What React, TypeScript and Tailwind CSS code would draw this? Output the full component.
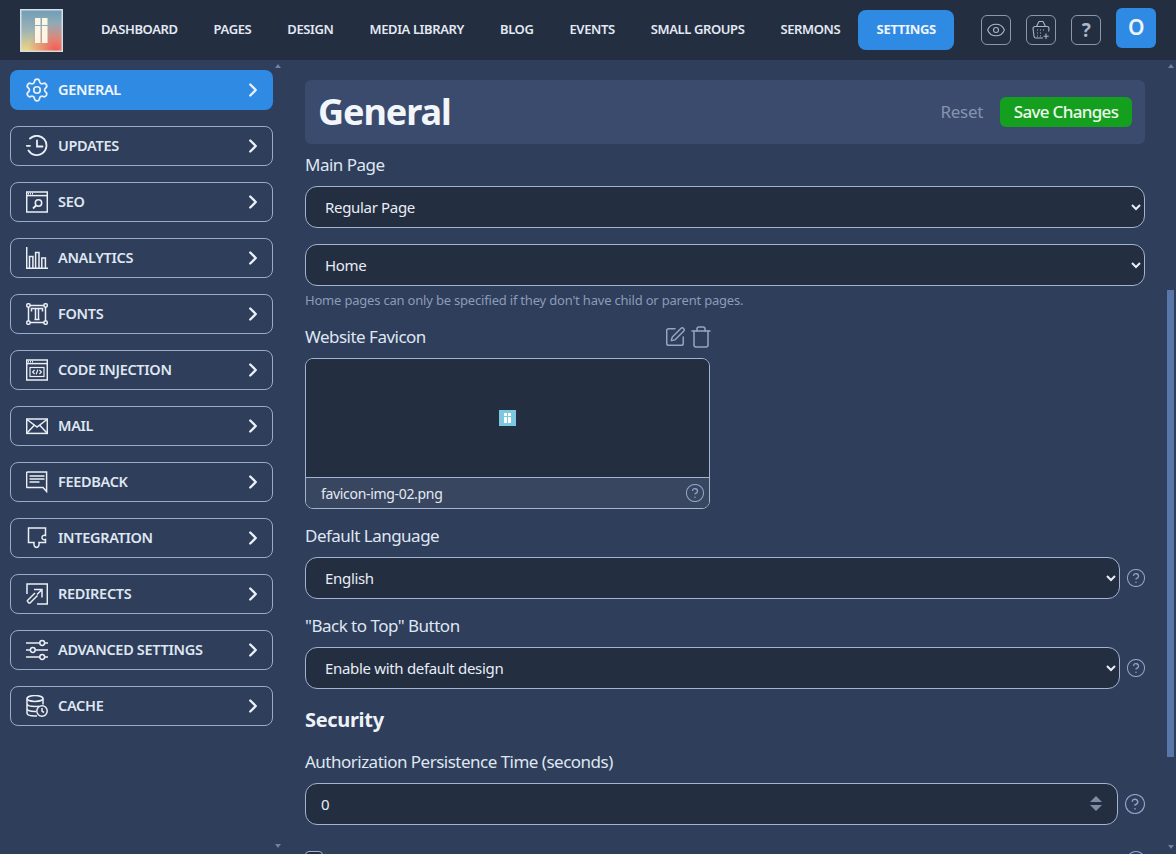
import React from "react";
import { ChevronRight, Eye, Settings, SquarePen, Trash } from "lucide-react";

const navItems = ["DASHBOARD", "PAGES", "DESIGN", "MEDIA LIBRARY", "BLOG", "EVENTS", "SMALL GROUPS", "SERMONS"];

const iconProps = {
  width: 22,
  height: 22,
  viewBox: "0 0 22 22",
  fill: "none",
  stroke: "currentColor",
  strokeWidth: 1.5,
};

function SeoIcon() {
  return (
    <svg {...iconProps}>
      <rect x="0.7" y="1" width="20.6" height="20" />
      <path d="M1 4.6h20" />
      <path d="M2 2.8h5" strokeDasharray="1 1" />
      <circle cx="12.5" cy="12" r="3.2" />
      <path d="M10 14.5l-3 3" strokeWidth="1.8" />
    </svg>
  );
}

function AnalyticsIcon() {
  return (
    <svg {...iconProps}>
      <path d="M0.7 0v21.3H22" />
      <path d="M3.5 21V9.5h3.4V21M9.6 21V5.5h3.4V21M15.8 21V11h3.6v10" />
    </svg>
  );
}

function FontsIcon() {
  return (
    <svg {...iconProps}>
      <rect x="2.5" y="2.5" width="17" height="17" />
      <rect x="0.8" y="0.8" width="3.2" height="3.2" rx="1" fill="#2f3e5a" />
      <rect x="18" y="0.8" width="3.2" height="3.2" rx="1" fill="#2f3e5a" />
      <rect x="0.8" y="18" width="3.2" height="3.2" rx="1" fill="#2f3e5a" />
      <rect x="18" y="18" width="3.2" height="3.2" rx="1" fill="#2f3e5a" />
      <path d="M5.5 8.5V5.500h11v3M9.500 6v10.500M12.500 6v10.500M8.400 16.600h5.200" />
    </svg>
  );
}

function CodeIcon() {
  return (
    <svg {...iconProps}>
      <rect x="0.7" y="1" width="20.6" height="20" />
      <path d="M1 4.6h20" />
      <path d="M2 2.8h5" strokeDasharray="1 1" />
      <rect x="4" y="8.5" width="14" height="9" strokeWidth="1.2" />
      <path d="M8.6 11l-2 2 2 2M13.4 11l2 2-2 2M11.8 10.8l-1.6 4.4" strokeWidth="1.2" />
    </svg>
  );
}

function MailIcon() {
  return (
    <svg {...iconProps}>
      <rect x="0.7" y="4" width="20.6" height="14.4" />
      <path d="M1 4.5l10 7.500 10-7.500M1 18l7-7.500M21 18l-7-7.500" />
    </svg>
  );
}

function FeedbackIcon() {
  return (
    <svg {...iconProps}>
      <path d="M1.6 1h19v19.500l-3.600-3.900H1.600a1 1 0 0 1-1-1V2a1 1 0 0 1 1-1z" />
      <path d="M3.5 5h15M3.500 8h15M3.500 11h10" strokeWidth="1.6" />
    </svg>
  );
}

function IntegrationIcon() {
  return (
    <svg {...iconProps}>
      <path d="M2.5 1H19.500V8.500c-2-.8-3.500.3-3.500 2s1.500 2.800 3.500 2V15.500H13c.6 2.500-.5 5-2.500 5s-3-2.500-2.500-5H2.500Z" />
    </svg>
  );
}

function RedirectsIcon() {
  return (
    <svg {...iconProps}>
      <path d="M1 11V1h20.300v20H11" />
      <path d="M1 18l8-8M3.500 20.500l8-8M1 18l2.500 2.500" />
      <path d="M8 6.500h8v8M15.500 7L11 11.500" />
    </svg>
  );
}

function SlidersIcon() {
  return (
    <svg {...iconProps}>
      <path d="M0 4h13.800M18.600 4h3.400M0 11h4.400M9.200 11h12.800M0 18h13.800M18.600 18h3.400" />
      <circle cx="16.200" cy="4" r="2.400" />
      <circle cx="6.800" cy="11" r="2.400" />
      <circle cx="16.200" cy="18" r="2.400" />
    </svg>
  );
}

function CacheIcon() {
  return (
    <svg {...iconProps}>
      <ellipse cx="9" cy="3.500" rx="8" ry="2.900" />
      <path d="M1 3.500v14.500c0 1.800 3 3 8 3h2M17 3.500v6M1 8.500c0 1.800 3.500 3 8 3 1.500 0 3-.1 4-.4M1 13.500c0 1.800 3.500 2.900 8 2.900h1" />
      <circle cx="16" cy="16" r="5.200" fill="#2f3e5a" />
      <path d="M16 13v3.200l2 1.300" />
    </svg>
  );
}

function GearIcon() {
  return <Settings size={26} strokeWidth={1.6} className="shrink-0" />;
}

function UpdatesIcon() {
  return (
    <svg {...iconProps} strokeWidth="1.8" strokeLinecap="round">
      <path d="M4 3.500A9.700 9.700 0 1 1 2.500 15.500" />
      <path d="M0.800 10.800H4" />
      <path d="M11 5.500V11.500H16.500" />
    </svg>
  );
}

const sideItems = [
  { label: "GENERAL", Icon: GearIcon, active: true },
  { label: "UPDATES", Icon: UpdatesIcon },
  { label: "SEO", Icon: SeoIcon },
  { label: "ANALYTICS", Icon: AnalyticsIcon },
  { label: "FONTS", Icon: FontsIcon },
  { label: "CODE INJECTION", Icon: CodeIcon },
  { label: "MAIL", Icon: MailIcon },
  { label: "FEEDBACK", Icon: FeedbackIcon },
  { label: "INTEGRATION", Icon: IntegrationIcon },
  { label: "REDIRECTS", Icon: RedirectsIcon },
  { label: "ADVANCED SETTINGS", Icon: SlidersIcon },
  { label: "CACHE", Icon: CacheIcon },
];

function Logo() {
  return (
    <svg width="43" height="43" viewBox="0 0 43 43" className="shrink-0 mt-px">
      <defs>
        <linearGradient id="logoBase" x1="0" y1="0" x2="0" y2="1">
          <stop offset="0" stopColor="#6f9db8" />
          <stop offset="0.5" stopColor="#9fb3b4" />
          <stop offset="1" stopColor="#f2d77e" />
        </linearGradient>
        <radialGradient id="logoRed" cx="0.85" cy="1" r="0.7">
          <stop offset="0" stopColor="#f2575a" />
          <stop offset="1" stopColor="#f2575a" stopOpacity="0" />
        </radialGradient>
      </defs>
      <rect x="0.75" y="0.75" width="41.5" height="41.5" fill="url(#logoBase)" stroke="#d5dde6" strokeWidth="1.5" />
      <rect x="1.5" y="1.5" width="40" height="40" fill="url(#logoRed)" />
      <rect x="15" y="9" width="5.5" height="7" fill="#fdf6e6" />
      <rect x="22" y="9" width="5.5" height="7" fill="#fdf6e6" />
      <rect x="15" y="17" width="5.5" height="17" fill="#fdf6e6" />
      <rect x="22" y="17" width="5.5" height="17" fill="#fdf6e6" />
    </svg>
  );
}

function BasketIcon() {
  return (
    <svg width="20" height="20" viewBox="0 0 20 20" fill="none" stroke="currentColor" strokeWidth="1.1">
      <path d="M5.5 6.500L8 1.500h4l2.500 5" />
      <path d="M12 18H5a2 2 0 0 1-2-1.800L2 8.500a2 2 0 0 1 2-2h12a2 2 0 0 1 2 2l-.3 3" />
      <path d="M6 10h1M9 10h1M12 10h1M6 13h1M9 13h1M6 16h1M9 16h1" />
      <path d="M15 13.500v5.500M12.500 16.200h5.200" />
    </svg>
  );
}

function Help({ size = 18 }: { size?: number }) {
  return (
    <svg width={size} height={size} viewBox="1.5 1.5 21 21" fill="none" stroke="currentColor" strokeWidth="1.2" strokeLinecap="round" className="text-[#8ea3c8] shrink-0">
      <circle cx="12" cy="12" r="10" />
      <path d="M9.09 9a3 3 0 0 1 5.830 1c0 2-3 3-3 3" strokeWidth="1.5" />
      <path d="M12 17h.01" strokeWidth="1.8" />
    </svg>
  );
}

function Arrow({ down }: { down?: boolean }) {
  return <div className={`w-0 h-0 border-x-[3px] border-x-transparent ${down ? "border-t-[4px] border-t-[#6d80a3]" : "border-b-[4px] border-b-[#6d80a3]"}`} />;
}

function Field({ children }: { children: React.ReactNode }) {
  return <label className="flex items-center h-[42px] text-[17px] tracking-[-0.03em] text-[#dfe6f2]">{children}</label>;
}

function Select({ value, className }: { value: string; className?: string }) {
  return (
    <select
      defaultValue={value}
      className={`h-[42px] rounded-xl border border-[#a3b3d0] bg-[#232e41] pl-[15px] pr-[15px] text-[15px] text-[#e8edf5] outline-none ${className ?? ""}`}
    >
      <option>{value}</option>
    </select>
  );
}

export default function App() {
  return (
    <div className="h-screen overflow-hidden flex flex-col bg-[#2f3e5a] font-['Noto_Sans',sans-serif] tracking-[-0.02em]">
      {/* Top bar */}
      <header className="h-[60px] shrink-0 bg-[#232e41] flex items-center pl-5 pr-5">
        <Logo />
        <nav className="flex items-center ml-5">
          {navItems.map((item) => (
            <a key={item} className="px-[18px] text-[13px] font-semibold tracking-[-0.03em] text-[#e3e9f3] whitespace-nowrap">
              {item}
            </a>
          ))}
          <a className="h-10 w-[96px] justify-center flex items-center rounded-lg bg-[#2f8ae4] text-[13px] font-bold text-[#eef4fc]">
            SETTINGS
          </a>
        </nav>
        <div className="ml-auto flex items-center gap-[15px] text-[#aab6c9]">
          <button className="w-[30px] h-[30px] flex items-center justify-center rounded-md border border-[#8b97ab]">
            <Eye size={20} strokeWidth={1.3} />
          </button>
          <button className="w-[30px] h-[30px] flex items-center justify-center rounded-md border border-[#8b97ab]">
            <BasketIcon />
          </button>
          <button className="w-[30px] h-[30px] flex items-center justify-center rounded-md border border-[#8b97ab] text-[19px] font-bold">
            ?
          </button>
        </div>
        <button className="ml-[15px] -mt-1 w-10 h-10 rounded-md bg-[#2f8ae4] text-[#eef4fc] text-[21px] font-semibold">
          O
        </button>
      </header>

      <div className="flex-1 min-h-0 flex">
        {/* Sidebar */}
        <aside className="w-[305px] shrink-0 flex">
          <div className="w-[263px] ml-[10px] pt-[10px] flex flex-col gap-4">
            {sideItems.map(({ label, Icon, active }) => (
              <a
                key={label}
                className={`h-10 shrink-0 rounded-lg flex items-center text-[14.5px] font-semibold ${
                  active ? "bg-[#2f8ae4] text-[#f1f6fc] pl-4 pr-[9px]" : "border border-[#9aabc9] text-[#dfe6f2] pl-[15px] pr-2"
                }`}
              >
                <span className="w-[22px] h-6 flex items-center justify-center text-[#eaeff6]">
                  <Icon />
                </span>
                <span className="ml-[10px] flex-1">{label}</span>
                <ChevronRight size={22} strokeWidth={2.6} className="text-[#eaf0f8]" />
              </a>
            ))}
          </div>
          <div className="ml-[2px] w-[6px] pt-[4px] pb-[6px] flex flex-col justify-between items-center">
            <Arrow />
            <Arrow down />
          </div>
        </aside>

        {/* Main */}
        <main className="w-[840px] shrink-0 pt-5">
          <div className="h-16 rounded-md bg-[#3a4b6e] flex items-center pl-[13px] pr-[13px]">
            <h1 className="flex-1 text-[36px] font-bold tracking-[-0.03em] text-[#f2f5fa]">General</h1>
            <span className="text-[17px] text-[#8594ae]">Reset</span>
            <button className="ml-[17px] h-[30px] w-[132px] rounded-md bg-[#14a01e] text-[17px] font-medium tracking-[-0.04em] text-[#eef8ee]">
              Save Changes
            </button>
          </div>

          <Field>Main Page</Field>
          <Select value="Regular Page" className="w-full" />
          <Select value="Home" className="w-full mt-4" />
          <p className="h-[30px] flex items-center text-[13px] tracking-[-0.015em] text-[#8b9cb9]">
            Home pages can only be specified if they don't have child or parent pages.
          </p>

          <div className="w-[405px] flex items-center justify-between h-[42px]">
            <Field>Website Favicon</Field>
            <div className="flex items-center gap-[3px] -mr-[3px] text-[#94a6c6]">
              <SquarePen size={22} strokeWidth={1.6} />
              <Trash size={24} strokeWidth={1.5} />
            </div>
          </div>
          <div className="w-[405px] h-[151px] rounded-lg border border-[#a3b3d0] overflow-hidden flex flex-col">
            <div className="flex-1 bg-[#232e41] flex items-center justify-center border-b border-[#a3b3d0]">
              <div className="w-[17px] h-4 bg-[#7cc8e0] flex items-center justify-center gap-px">
                {[0, 1].map((i) => (
                  <div key={i} className="flex flex-col gap-px">
                    <span className="w-[3px] h-[3px] bg-white" />
                    <span className="w-[3px] h-[6px] bg-white" />
                  </div>
                ))}
              </div>
            </div>
            <div className="h-[30px] bg-[#39465f] flex items-center justify-between pl-[15px] pr-[5px] text-[14px] text-[#e3e9f3]">
              favicon-img-02.png
              <Help />
            </div>
          </div>

          <div className="mt-1.5">
            <Field>Default Language</Field>
          </div>
          <div className="flex items-center gap-[7px]">
            <Select value="English" className="w-[815px]" />
            <Help />
          </div>
          <div className="mt-1.5">
            <Field>"Back to Top" Button</Field>
          </div>
          <div className="flex items-center gap-[7px]">
            <Select value="Enable with default design" className="w-[815px]" />
            <Help />
          </div>

          <h2 className="mt-2.5 h-[42px] flex items-center text-[20px] font-bold text-[#eef2f8]">Security</h2>
          <Field>Authorization Persistence Time (seconds)</Field>
          <div className="flex items-center gap-[7px]">
            <div className="relative w-[813px]">
              <input
                defaultValue="0"
                className="w-full h-[42px] rounded-xl border border-[#a3b3d0] bg-[#232e41] pl-[15px] text-[15px] text-[#e8edf5] outline-none"
              />
              <div className="absolute right-[16px] top-[13px] flex flex-col gap-[3px]">
                <div className="w-0 h-0 border-x-[6px] border-x-transparent border-b-[6px] border-b-[#7f8ca3]" />
                <div className="w-0 h-0 border-x-[6px] border-x-transparent border-t-[6px] border-t-[#7f8ca3]" />
              </div>
            </div>
            <Help size={20} />
          </div>

          <div className="mt-[26px] flex items-start justify-between">
            <div className="w-[18px] h-[18px] rounded border border-[#a3b3d0] bg-[#232e41]" />
            <Help />
          </div>
        </main>

        {/* Page scrollbar */}
        <div className="ml-[22px] w-[7px] pt-[4px] pb-[5px] flex flex-col items-center">
          <Arrow />
          <div className="mt-[222px] w-[7px] h-[467px] bg-[#5876a8]" />
          <div className="mt-auto">
            <Arrow down />
          </div>
        </div>
      </div>
    </div>
  );
}
